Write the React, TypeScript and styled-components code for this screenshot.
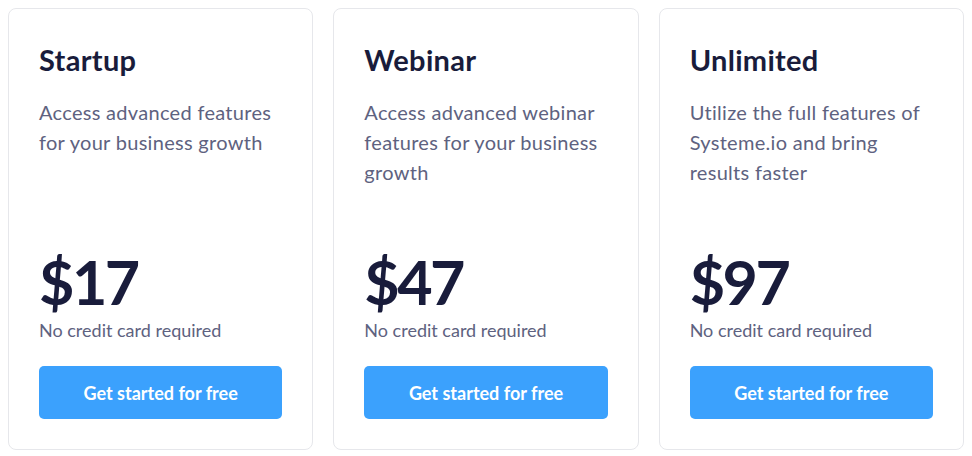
import React from 'react';
import styled, { createGlobalStyle } from "styled-components";

type PlanType = {
    title: string
    text: string
    price: string
}

const plans: PlanType[] = [
    { title: 'Startup', text: 'Access advanced features for your business growth', price: '$17' },
    { title: 'Webinar', text: 'Access advanced webinar features for your business growth', price: '$47' },
    { title: 'Unlimited', text: 'Utilize the full features of Systeme.io and bring results faster', price: '$97' },
]

const Plan = (props: PlanType) => {
    return (
        <Card>
            <Title>{props.title}</Title>
            <Text>{props.text}</Text>
            <Price>{props.price}</Price>
            <Note>No credit card required</Note>
            <Button>Get started for free</Button>
        </Card>
    );
};

export default function App() {
    return (
        <>
            <GlobalStyle/>
            <Grid>
                {plans.map(p => <Plan key={p.title} {...p}/>)}
            </Grid>
        </>
    );
}

const GlobalStyle = createGlobalStyle`
  body {
    margin: 8px;
    background: #ffffff;
    font-family: "Lato", "Noto Sans", sans-serif;
  }
`

const Grid = styled.div`
  display: grid;
  grid-template-columns: repeat(3, 1fr);
  gap: 20px;
`

const Card = styled.div`
  display: flex;
  flex-direction: column;
  border: 1px solid #e6e7eb;
  border-radius: 8px;
  padding: 30px;
  height: 442px;
  box-sizing: border-box;
  background: #fff;
`

const Title = styled.h3`
  margin: 0;
  font-size: 29px;
  font-weight: 700;
  line-height: 42px;
  letter-spacing: 0.3px;
  color: #191c3b;
`

const Text = styled.p`
  margin: 16px 0 0;
  font-size: 20px;
  line-height: 30px;
  letter-spacing: 0.3px;
  color: #5e6280;
  height: 100px;
`

const Price = styled.div`
  margin-top: auto;
  font-size: 61px;
  font-weight: 700;
  line-height: 64px;
  color: #191c3b;
  letter-spacing: -2.5px;
`

const Note = styled.div`
  margin-top: 4px;
  font-size: 18px;
  line-height: 24px;
  color: #5e6280;
`

const Button = styled.button`
  margin-top: 24px;
  width: 100%;
  height: 53px;
  border: none;
  border-radius: 5px;
  background: #3ba1fd;
  color: #fff;
  font-family: inherit;
  font-size: 18px;
  font-weight: 700;
  cursor: pointer;
`
